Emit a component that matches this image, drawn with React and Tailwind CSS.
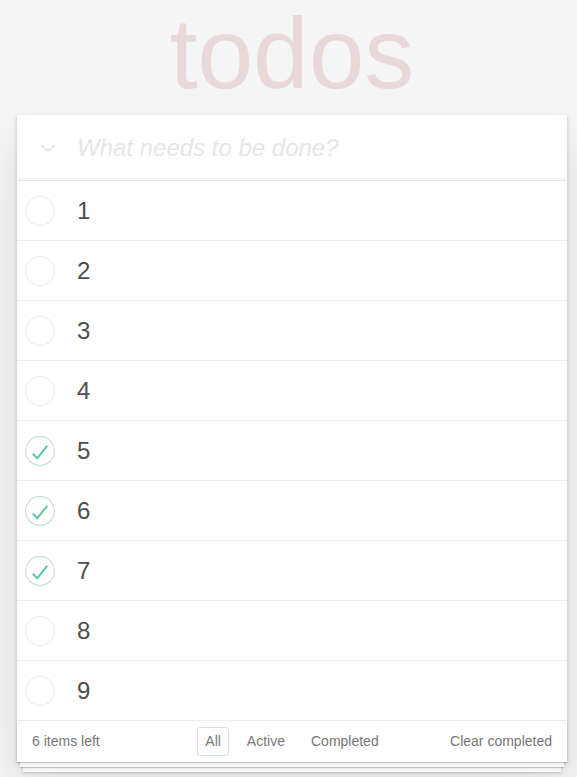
import { useState } from 'react';

const initialTodos = [
  { id: 1, title: '1', done: false },
  { id: 2, title: '2', done: false },
  { id: 3, title: '3', done: false },
  { id: 4, title: '4', done: false },
  { id: 5, title: '5', done: true },
  { id: 6, title: '6', done: true },
  { id: 7, title: '7', done: true },
  { id: 8, title: '8', done: false },
  { id: 9, title: '9', done: false },
];

function Toggle({ done, onClick }) {
  return (
    <button onClick={onClick} className="ml-[8px] w-[30px] h-[30px] shrink-0">
      <svg width="30" height="30" viewBox="0 0 100 100" className="block">
        <circle cx="50" cy="50" r="48" fill="none" stroke={done ? '#bddad5' : '#ededed'} strokeWidth="3.4" />
        {done && (
          <polyline
            points="26,59 41,74 74,33"
            fill="none"
            stroke="#5dc2af"
            strokeWidth="6.5"
            strokeLinejoin="miter"
          />
        )}
      </svg>
    </button>
  );
}

export default function App() {
  const [todos, setTodos] = useState(initialTodos);
  const [filter, setFilter] = useState('All');

  const left = todos.filter((t) => !t.done).length;
  const toggle = (id) => setTodos(todos.map((t) => (t.id === id ? { ...t, done: !t.done } : t)));

  const filterClass = (name) =>
    `px-[7px] py-[3px] rounded-[3px] border ${
      filter === name ? 'border-[#efd5d5]' : 'border-transparent hover:border-[#f5e3e3]'
    }`;

  return (
    <div className="min-h-screen bg-[#f5f5f5] pt-px pb-10 font-['Liberation_Sans',Arial,sans-serif] text-[#4d4d4d]">
      <div className="w-[550px] ml-[17px]">
        <h1 className="-mt-[4px] mb-[6px] text-center text-[100px] leading-[112px] font-thin text-[#e9d8d8]">
          todos
        </h1>

        <section className="bg-white shadow-[0_2px_4px_0_rgba(0,0,0,0.2),0_25px_50px_0_rgba(0,0,0,0.1)]">
          <div className="flex items-center h-[65px] shadow-[inset_0_-2px_1px_rgba(0,0,0,0.03)]">
            <div className="w-[60px] flex justify-center pl-[2px] pt-[1px]">
              <svg width="16" height="8" viewBox="0 0 16 8" className="block">
                <polyline points="1,1 8,7 15,1" fill="none" stroke="#e6e6e6" strokeWidth="2" />
              </svg>
            </div>
            <input
              className="flex-1 h-full pr-4 bg-transparent outline-none text-[24px] italic text-[#4d4d4d] placeholder:text-[#e6e6e6]"
              placeholder="What needs to be done?"
            />
          </div>

          <ul className="border-t border-[#e6e6e6]">
            {todos.map((t) => (
              <li key={t.id} className="flex items-center h-[60px] border-b border-[#ededed]">
                <Toggle done={t.done} onClick={() => toggle(t.id)} />
                <span className="ml-[22px] text-[24px] leading-none text-[#4d4d4d]">{t.title}</span>
              </li>
            ))}
          </ul>

          <footer className="grid grid-cols-[1fr_auto_1fr] items-center h-[41px] px-[15px] text-[14px] text-[#777] shadow-[0_1px_1px_rgba(0,0,0,0.2),0_8px_0_-3px_#f6f6f6,0_9px_1px_-3px_rgba(0,0,0,0.2),0_16px_0_-6px_#f6f6f6,0_17px_2px_-6px_rgba(0,0,0,0.2)]">
            <span>{left} items left</span>
            <div className="flex items-center gap-[10px]">
              {['All', 'Active', 'Completed'].map((f) => (
                <button key={f} onClick={() => setFilter(f)} className={filterClass(f)}>
                  {f}
                </button>
              ))}
            </div>
            <button className="justify-self-end hover:underline">Clear completed</button>
          </footer>
        </section>
      </div>
    </div>
  );
}
